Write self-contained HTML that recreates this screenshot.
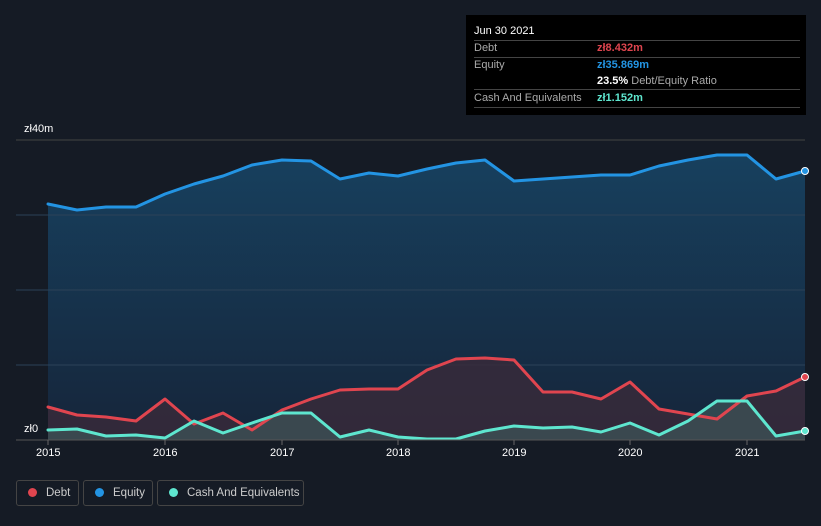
<!DOCTYPE html>
<html><head><meta charset="utf-8"><style>
html,body{margin:0;width:821px;height:526px;overflow:hidden}
body{background:#151b25;font-family:"Liberation Sans",sans-serif;position:relative}
.tip{position:absolute;left:466px;top:15px;width:340px;height:100px;background:#000;color:#fff;font-size:11px}
.row{position:absolute;left:8px;width:326px;border-top:1px solid #444}
.lab{position:absolute;left:8px;color:#aaa}
.val{position:absolute;left:131px;font-weight:bold}
.leg{position:absolute;top:480px;height:26px;border:1px solid #444;border-radius:3px;color:#ccc;font-size:11.5px;line-height:24px;box-sizing:border-box;white-space:nowrap;overflow:hidden}
.leg i{display:inline-block;width:9px;height:9px;border-radius:50%;margin:0 9px 0 11px;vertical-align:-1px}
.ax{position:absolute;color:#fff;font-size:11px}
</style></head><body>
<svg width="821" height="526" style="position:absolute;left:0;top:0">
<defs><linearGradient id="g" x1="0" y1="0" x2="0" y2="1"><stop offset="0" stop-color="#17405e"/><stop offset="1" stop-color="#16253a"/></linearGradient></defs>
<line x1="16" y1="140" x2="805" y2="140" stroke="#444" />
<polygon fill="url(#g)" points="48,440 48,204 77,210 106,207 136,207 165,194 194,184 223,176 252,165 282,160 311,161 340,179 369,173 398,176 427,169 456,163 485,160 514,181 543,179 572,177 601,175 630,175 659,166 688,160 717,155 747,155 776,179 805,171 805,440"/>
<g stroke="#2c4258" stroke-width="1"><line x1="16" y1="215" x2="805" y2="215"/><line x1="16" y1="290" x2="805" y2="290"/><line x1="16" y1="365" x2="805" y2="365"/></g>
<polygon fill="#3a2a3a" opacity="0.8" points="48,440 48,407 77,415 106,417 136,421 165,399 194,424 223,413 252,430 282,410 311,399 340,390 369,389 398,389 427,370 456,359 485,358 514,360 543,392 572,392 601,399 630,382 659,409 688,414 717,419 747,396 776,391 805,377 805,440"/>
<polygon fill="#3d5558" opacity="0.7" points="48,440 48,430 77,429 106,436 136,435 165,438 194,421 223,433 252,423 282,413 311,413 340,437 369,430 398,437 427,439 456,439 485,431 514,426 543,428 572,427 601,432 630,423 659,435 688,421 717,401 747,401 776,436 805,431 805,440"/>
<g fill="none" stroke-width="3" stroke-linejoin="round" stroke-linecap="round">
<polyline stroke="#2394e3" points="48,204 77,210 106,207 136,207 165,194 194,184 223,176 252,165 282,160 311,161 340,179 369,173 398,176 427,169 456,163 485,160 514,181 543,179 572,177 601,175 630,175 659,166 688,160 717,155 747,155 776,179 805,171"/>
<polyline stroke="#e0454f" points="48,407 77,415 106,417 136,421 165,399 194,424 223,413 252,430 282,410 311,399 340,390 369,389 398,389 427,370 456,359 485,358 514,360 543,392 572,392 601,399 630,382 659,409 688,414 717,419 747,396 776,391 805,377"/>
<polyline stroke="#5ee6cf" points="48,430 77,429 106,436 136,435 165,438 194,421 223,433 252,423 282,413 311,413 340,437 369,430 398,437 427,439 456,439 485,431 514,426 543,428 572,427 601,432 630,423 659,435 688,421 717,401 747,401 776,436 805,431"/>
</g>
<line x1="16" y1="440" x2="805" y2="440" stroke="#555"/>
<g stroke="#666"><line x1="48" y1="440" x2="48" y2="445"/><line x1="165" y1="440" x2="165" y2="445"/><line x1="282" y1="440" x2="282" y2="445"/><line x1="398" y1="440" x2="398" y2="445"/><line x1="514" y1="440" x2="514" y2="445"/><line x1="630" y1="440" x2="630" y2="445"/><line x1="747" y1="440" x2="747" y2="445"/></g>
<circle cx="805" cy="171" r="3.5" fill="#2394e3" stroke="#fff"/>
<circle cx="805" cy="377" r="3.5" fill="#e0454f" stroke="#fff"/>
<circle cx="805" cy="431" r="3.5" fill="#5ee6cf" stroke="#fff"/>
</svg>
<div class="ax" style="left:24px;top:123px">zł40m</div>
<div class="ax" style="left:24px;top:423px">zł0</div>
<div class="ax" style="left:36px;top:447px">2015</div>
<div class="ax" style="left:153px;top:447px">2016</div>
<div class="ax" style="left:270px;top:447px">2017</div>
<div class="ax" style="left:386px;top:447px">2018</div>
<div class="ax" style="left:502px;top:447px">2019</div>
<div class="ax" style="left:618px;top:447px">2020</div>
<div class="ax" style="left:735px;top:447px">2021</div>
<div class="tip">
<div style="position:absolute;left:8px;top:10px">Jun 30 2021</div>
<div class="row" style="top:25px"></div>
<div class="lab" style="top:27px">Debt</div><div class="val" style="top:27px;color:#e0454f">zł8.432m</div>
<div class="row" style="top:42px"></div>
<div class="lab" style="top:44px">Equity</div><div class="val" style="top:44px;color:#2394e3">zł35.869m</div>
<div class="val" style="top:60px;color:#fff">23.5% <span style="color:#aaa;font-weight:normal">Debt/Equity Ratio</span></div>
<div class="row" style="top:74px"></div>
<div class="lab" style="top:77px">Cash And Equivalents</div><div class="val" style="top:77px;color:#5ee6cf">zł1.152m</div>
<div class="row" style="top:92px"></div>
</div>
<div class="leg" style="left:16px;width:63px"><i style="background:#e0454f"></i>Debt</div>
<div class="leg" style="left:83px;width:70px"><i style="background:#2394e3"></i>Equity</div>
<div class="leg" style="left:157px;width:147px"><i style="background:#5ee6cf"></i>Cash And Equivalents</div>
</body></html>
